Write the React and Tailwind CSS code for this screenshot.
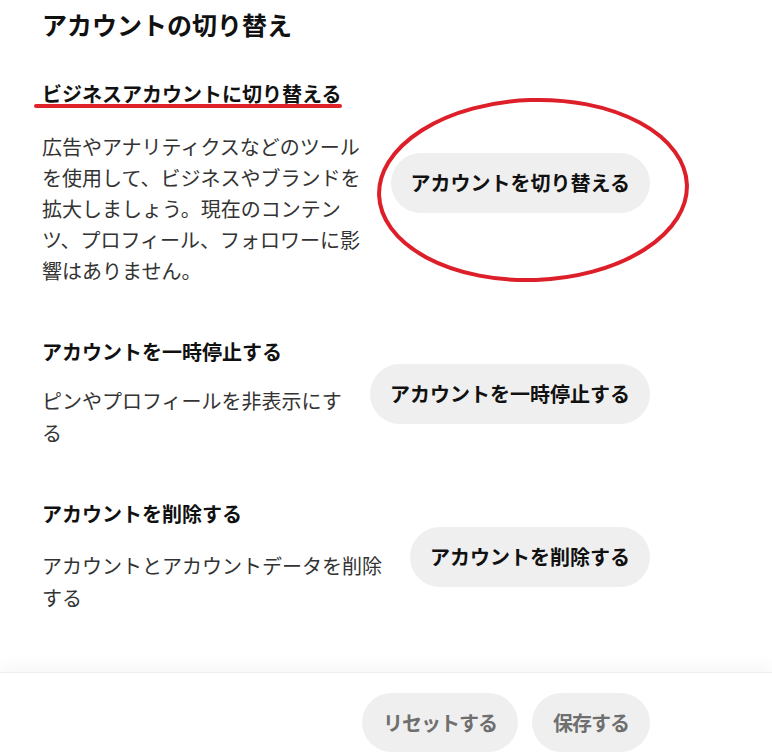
import React from 'react';

// ─── Data ────────────────────────────────────────────────────────
const SECTIONS = [
  {
    heading: 'ビジネスアカウントに切り替える',
    body: '広告やアナリティクスなどのツールを使用して、ビジネスやブランドを拡大しましょう。現在のコンテンツ、プロフィール、フォロワーに影響はありません。',
    action: 'アカウントを切り替える',
    marked: true,
    rowClass: 'mt-[40px]',
    bodyClass: 'mt-[23px] leading-[31px]',
  },
  {
    heading: 'アカウントを一時停止する',
    body: 'ピンやプロフィールを非表示にする',
    action: 'アカウントを一時停止する',
    rowClass: 'mt-[52px]',
    bodyClass: 'mt-[19px] leading-[32px]',
  },
  {
    heading: 'アカウントを削除する',
    body: 'アカウントとアカウントデータを削除する',
    action: 'アカウントを削除する',
    rowClass: 'mt-[51px]',
    bodyClass: 'mt-[22px] leading-[32px]',
  },
];

// ─── Section row ─────────────────────────────────────────────────
function SectionRow({ section }) {
  return (
    <div className={`relative flex items-center gap-6 ${section.rowClass}`}>
      <div className="min-w-0 flex-1">
        <h2 className="relative text-[20px] font-bold leading-[28px] text-[#111]">
          {section.heading}
          {section.marked && (
            <span
              className="absolute left-[-8px] top-[24px] h-[4px] w-[308px] rounded-full bg-[#e0222b]"
              aria-hidden="true"
            />
          )}
        </h2>
        <p className={`text-[20px] text-[#333] ${section.bodyClass}`}>{section.body}</p>
      </div>
      <button className="shrink-0 rounded-full bg-[#efefef] px-5 py-4 text-[20px] font-bold leading-[28px] text-[#111]">
        {section.action}
      </button>
    </div>
  );
}

// ─── Page ────────────────────────────────────────────────────────
export default function App() {
  return (
    <div className="relative flex min-h-[755px] flex-col bg-white font-['Noto_Sans_CJK_JP','Noto_Sans',sans-serif]">
      <div className="flex-1 pb-[51px] pl-[42px] pr-[122px] pt-[8px]">
        <h1 className="text-[25px] font-bold leading-[32px] text-[#111]">アカウントの切り替え</h1>
        {SECTIONS.map((s) => (
          <SectionRow key={s.heading} section={s} />
        ))}
      </div>

      {/* annotation ellipse around the switch button */}
      <svg
        className="pointer-events-none absolute left-[374px] top-[95px]"
        width="318"
        height="190"
        viewBox="0 0 318 190"
        fill="none"
        aria-hidden="true"
      >
        <ellipse cx="159" cy="95" rx="154" ry="90" stroke="#dd1f2a" strokeWidth="4" transform="rotate(-2 159 95)" />
      </svg>

      {/* ── Footer ─────────────────────────────────────────── */}
      <footer className="flex justify-end gap-[14px] border-t border-[#eeeeee] pb-[3px] pl-[42px] pr-[122px] pt-[20px] shadow-[0_-8px_14px_rgba(0,0,0,0.03)]">
        <button className="rounded-full bg-[#efefef] px-[21px] py-[15px] text-[20px] font-bold leading-[29px] tracking-[-1px] text-[#6f6f6f]">
          リセットする
        </button>
        <button className="rounded-full bg-[#efefef] px-[21px] py-[15px] text-[20px] font-bold leading-[29px] tracking-[-1px] text-[#6f6f6f]">
          保存する
        </button>
      </footer>
    </div>
  );
}
